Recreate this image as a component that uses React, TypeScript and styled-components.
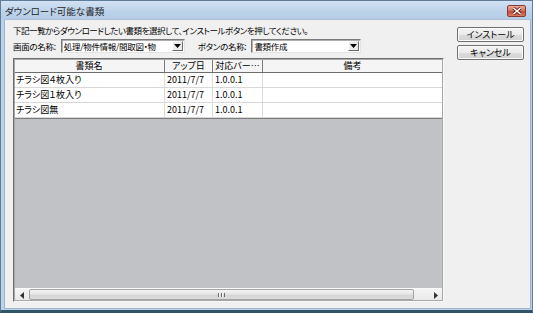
import * as React from "react";
import styled, { createGlobalStyle } from "styled-components";

type Doc = {
  name: string;
  date: string;
  version: string;
  note: string;
};

const COLUMNS = [
  { label: "書類名", width: 151 },
  { label: "アップ日", width: 48 },
  { label: "対応バー…", width: 50 },
  { label: "備考", width: 0 },
];

const DOCS: Doc[] = [
  { name: "チラシ図４枚入り", date: "2011/7/7", version: "1.0.0.1", note: "" },
  { name: "チラシ図１枚入り", date: "2011/7/7", version: "1.0.0.1", note: "" },
  { name: "チラシ図無", date: "2011/7/7", version: "1.0.0.1", note: "" },
];

const GlobalStyle = createGlobalStyle`
  html, body {
    margin: 0;
    padding: 0;
    background: #ffffff;
  }
  body {
    width: 533px;
    height: 313px;
    overflow: hidden;
    font-family: "Noto Sans CJK JP", "Noto Sans", sans-serif;
    font-feature-settings: "palt";
    color: #000;
  }
`;

const DropArrow: React.FC = () => (
  <svg width="7" height="4" viewBox="0 0 7 4">
    <polygon points="0,0 7,0 3.5,4" fill="#000" />
  </svg>
);

const CloseGlyph: React.FC = () => (
  <svg width="10" height="8" viewBox="0 0 10 8">
    <path d="M1.5 1 L8.5 7 M8.5 1 L1.5 7" stroke="#5a1a10" strokeWidth="3" />
    <path d="M1.5 1 L8.5 7 M8.5 1 L1.5 7" stroke="#ffffff" strokeWidth="1.6" />
  </svg>
);

const App: React.FC = () => {
  return (
    <>
      <GlobalStyle />
      <Window>
        <TitleBar>
          <Title>ダウンロード可能な書類</Title>
          <CloseButton>
            <CloseGlyph />
          </CloseButton>
        </TitleBar>
        <Frame>
          <Client>
            <Main>
              <Instruction>
                下記一覧からダウンロードしたい書類を選択して、インストールボタンを押してください。
              </Instruction>
              <FieldRow>
                <Label>画面の名称:</Label>
                <Combo $width={124}>
                  <ComboText>処理/物件情報/間取図・物</ComboText>
                  <ComboButton>
                    <DropArrow />
                  </ComboButton>
                </Combo>
                <Label $indent={13}>ボタンの名称:</Label>
                <Combo $width={110}>
                  <ComboText>書類作成</ComboText>
                  <ComboButton>
                    <DropArrow />
                  </ComboButton>
                </Combo>
              </FieldRow>
              <Grid>
                <HeaderRow>
                  {COLUMNS.map((col) => (
                    <HeaderCell key={col.label} $width={col.width}>
                      {col.label}
                    </HeaderCell>
                  ))}
                </HeaderRow>
                {DOCS.map((doc) => (
                  <DataRow key={doc.name}>
                    <Cell $width={151}>{doc.name}</Cell>
                    <Cell $width={48}>{doc.date}</Cell>
                    <Cell $width={50}>{doc.version}</Cell>
                    <Cell $width={0}>{doc.note}</Cell>
                  </DataRow>
                ))}
                <EmptyArea />
                <HScroll>
                  <ScrollArrow>
                    <svg width="4" height="7" viewBox="0 0 4 7">
                      <polygon points="4,0 4,7 0,3.5" fill="#333" />
                    </svg>
                  </ScrollArrow>
                  <Thumb>
                    <Grip />
                  </Thumb>
                  <ScrollEnd>
                    <svg width="4" height="7" viewBox="0 0 4 7">
                      <polygon points="0,0 0,7 4,3.5" fill="#333" />
                    </svg>
                  </ScrollEnd>
                </HScroll>
              </Grid>
            </Main>
            <Buttons>
              <PushButton>インストール</PushButton>
              <PushButton>キャンセル</PushButton>
            </Buttons>
          </Client>
        </Frame>
      </Window>
    </>
  );
};

export default App;

const Window = styled.div`
  width: 533px;
  height: 313px;
  box-sizing: border-box;
  display: flex;
  flex-direction: column;
  border: 1px solid #5f7d99;
  border-bottom: 3px solid #2d5566;
  background: #bcd2ea;
`;

const TitleBar = styled.div`
  height: 18px;
  flex-shrink: 0;
  display: flex;
  align-items: center;
  justify-content: space-between;
  padding: 0 6px 0 4px;
  background: linear-gradient(#d3e2f3, #bcd2ea 60%, #b6cde7);
`;

const Title = styled.div`
  font-size: 9.5px;
  line-height: 12px;
  color: #1e1e1e;
  padding-top: 1px;
`;

const CloseButton = styled.div`
  width: 19px;
  height: 12px;
  margin-top: 2px;
  box-sizing: border-box;
  border: 1px solid #8a3a32;
  border-radius: 2px;
  background: linear-gradient(#e8a996, #d2705c 50%, #c24a36 51%, #d67a60);
  display: flex;
  align-items: center;
  justify-content: center;
`;

const Frame = styled.div`
  flex: 1;
  display: flex;
  padding: 0 3px 1px 3px;
`;

const Client = styled.div`
  flex: 1;
  display: flex;
  gap: 13px;
  padding: 5px 6px 6px 8px;
  background: #f0f0f0;
  border: 1px solid #9fb4cb;
  border-top-color: #aebfd3;
`;

const Main = styled.div`
  width: 431px;
  display: flex;
  flex-direction: column;
  gap: 3px;
`;

const Instruction = styled.div`
  font-size: 8.5px;
  letter-spacing: -0.45px;
  line-height: 11px;
  white-space: nowrap;
`;

const FieldRow = styled.div`
  display: flex;
  align-items: center;
  height: 14px;
  margin-bottom: 2px;
`;

const Label = styled.span<{ $indent?: number }>`
  font-size: 8.5px;
  letter-spacing: -0.3px;
  line-height: 11px;
  white-space: nowrap;
  margin-left: ${(p) => p.$indent ?? 0}px;
  margin-right: 5px;
`;

const Combo = styled.div<{ $width: number }>`
  width: ${(p) => p.$width}px;
  height: 14px;
  box-sizing: border-box;
  display: flex;
  align-items: stretch;
  background: #fff;
  border: 1px solid;
  border-color: #7a7a7a #e3e3e3 #e3e3e3 #7a7a7a;
  box-shadow: inset 1px 1px 0 #b0b0b0;
`;

const ComboText = styled.div`
  flex: 1;
  min-width: 0;
  font-size: 8.5px;
  letter-spacing: -0.3px;
  line-height: 12px;
  padding-left: 2px;
  white-space: nowrap;
  overflow: hidden;
`;

const ComboButton = styled.div`
  width: 11px;
  margin: 1px;
  box-sizing: border-box;
  background: #ececec;
  border: 1px solid;
  border-color: #ffffff #6a6a6a #6a6a6a #ffffff;
  display: flex;
  align-items: center;
  justify-content: center;
`;

const Grid = styled.div`
  flex: 1;
  display: flex;
  flex-direction: column;
  box-sizing: border-box;
  border: 1px solid;
  border-color: #6e6e6e #f8f8f8 #f8f8f8 #6e6e6e;
  outline: 1px solid #a8a8a8;
  outline-offset: -2px;
  background: #c1c2c5;
`;

const HeaderRow = styled.div`
  display: flex;
  height: 13px;
  flex-shrink: 0;
  border-bottom: 1px solid #6d6d6d;
  background: #f5f5f5;
`;

const HeaderCell = styled.div<{ $width: number }>`
  ${(p) => (p.$width ? `width: ${p.$width}px;` : "flex: 1;")}
  flex-shrink: 0;
  box-sizing: border-box;
  border-right: 1px solid #7c7c7c;
  font-size: 9px;
  line-height: 13px;
  text-align: center;
  white-space: nowrap;
  overflow: hidden;
`;

const DataRow = styled.div`
  display: flex;
  height: 15px;
  flex-shrink: 0;
  background: #ffffff;
  border-bottom: 1px solid #d8d8d8;
  box-sizing: border-box;
`;

const Cell = styled.div<{ $width: number }>`
  ${(p) => (p.$width ? `width: ${p.$width}px;` : "flex: 1;")}
  flex-shrink: 0;
  box-sizing: border-box;
  border-right: 1px solid #dcdcdc;
  padding-left: 2px;
  font-size: 9px;
  line-height: 14px;
  white-space: nowrap;
  overflow: hidden;
`;

const EmptyArea = styled.div`
  flex: 1;
  border-top: 1px solid #7c7c7c;
`;

const HScroll = styled.div`
  height: 12px;
  flex-shrink: 0;
  display: flex;
  background: linear-gradient(#f4f4f4, #e8e8e8);
  border-top: 1px solid #fafafa;
`;

const ScrollArrow = styled.div`
  width: 15px;
  display: flex;
  align-items: center;
  justify-content: center;
`;

const Thumb = styled.div`
  flex: 1;
  margin: 0 0 1px 0;
  box-sizing: border-box;
  border: 1px solid #a3a3a3;
  border-radius: 2px;
  background: linear-gradient(#f5f5f5, #e3e3e3 50%, #d4d4d4 51%, #dcdcdc);
  display: flex;
  align-items: center;
  justify-content: center;
`;

const Grip = styled.div`
  width: 7px;
  height: 4px;
  background: repeating-linear-gradient(
    90deg,
    #6a6a6a 0 1px,
    #f6f6f6 1px 2px,
    transparent 2px 3px
  );
`;

const ScrollEnd = styled.div`
  width: 29px;
  display: flex;
  align-items: center;
  justify-content: flex-end;
  padding-right: 5px;
  box-sizing: border-box;
`;

const Buttons = styled.div`
  width: 67px;
  display: flex;
  flex-direction: column;
  gap: 3px;
  padding-top: 2px;
`;

const PushButton = styled.button`
  height: 15px;
  padding: 0;
  box-sizing: border-box;
  border: 1px solid #707070;
  border-radius: 2px;
  background: linear-gradient(#f4f4f4, #ebebeb 50%, #dddddd 51%, #d2d2d2);
  box-shadow: inset 0 0 0 1px #fbfbfb;
  font-family: "Noto Sans CJK JP", sans-serif;
  font-feature-settings: "palt";
  font-size: 9px;
  line-height: 12px;
  color: #000;
`;
